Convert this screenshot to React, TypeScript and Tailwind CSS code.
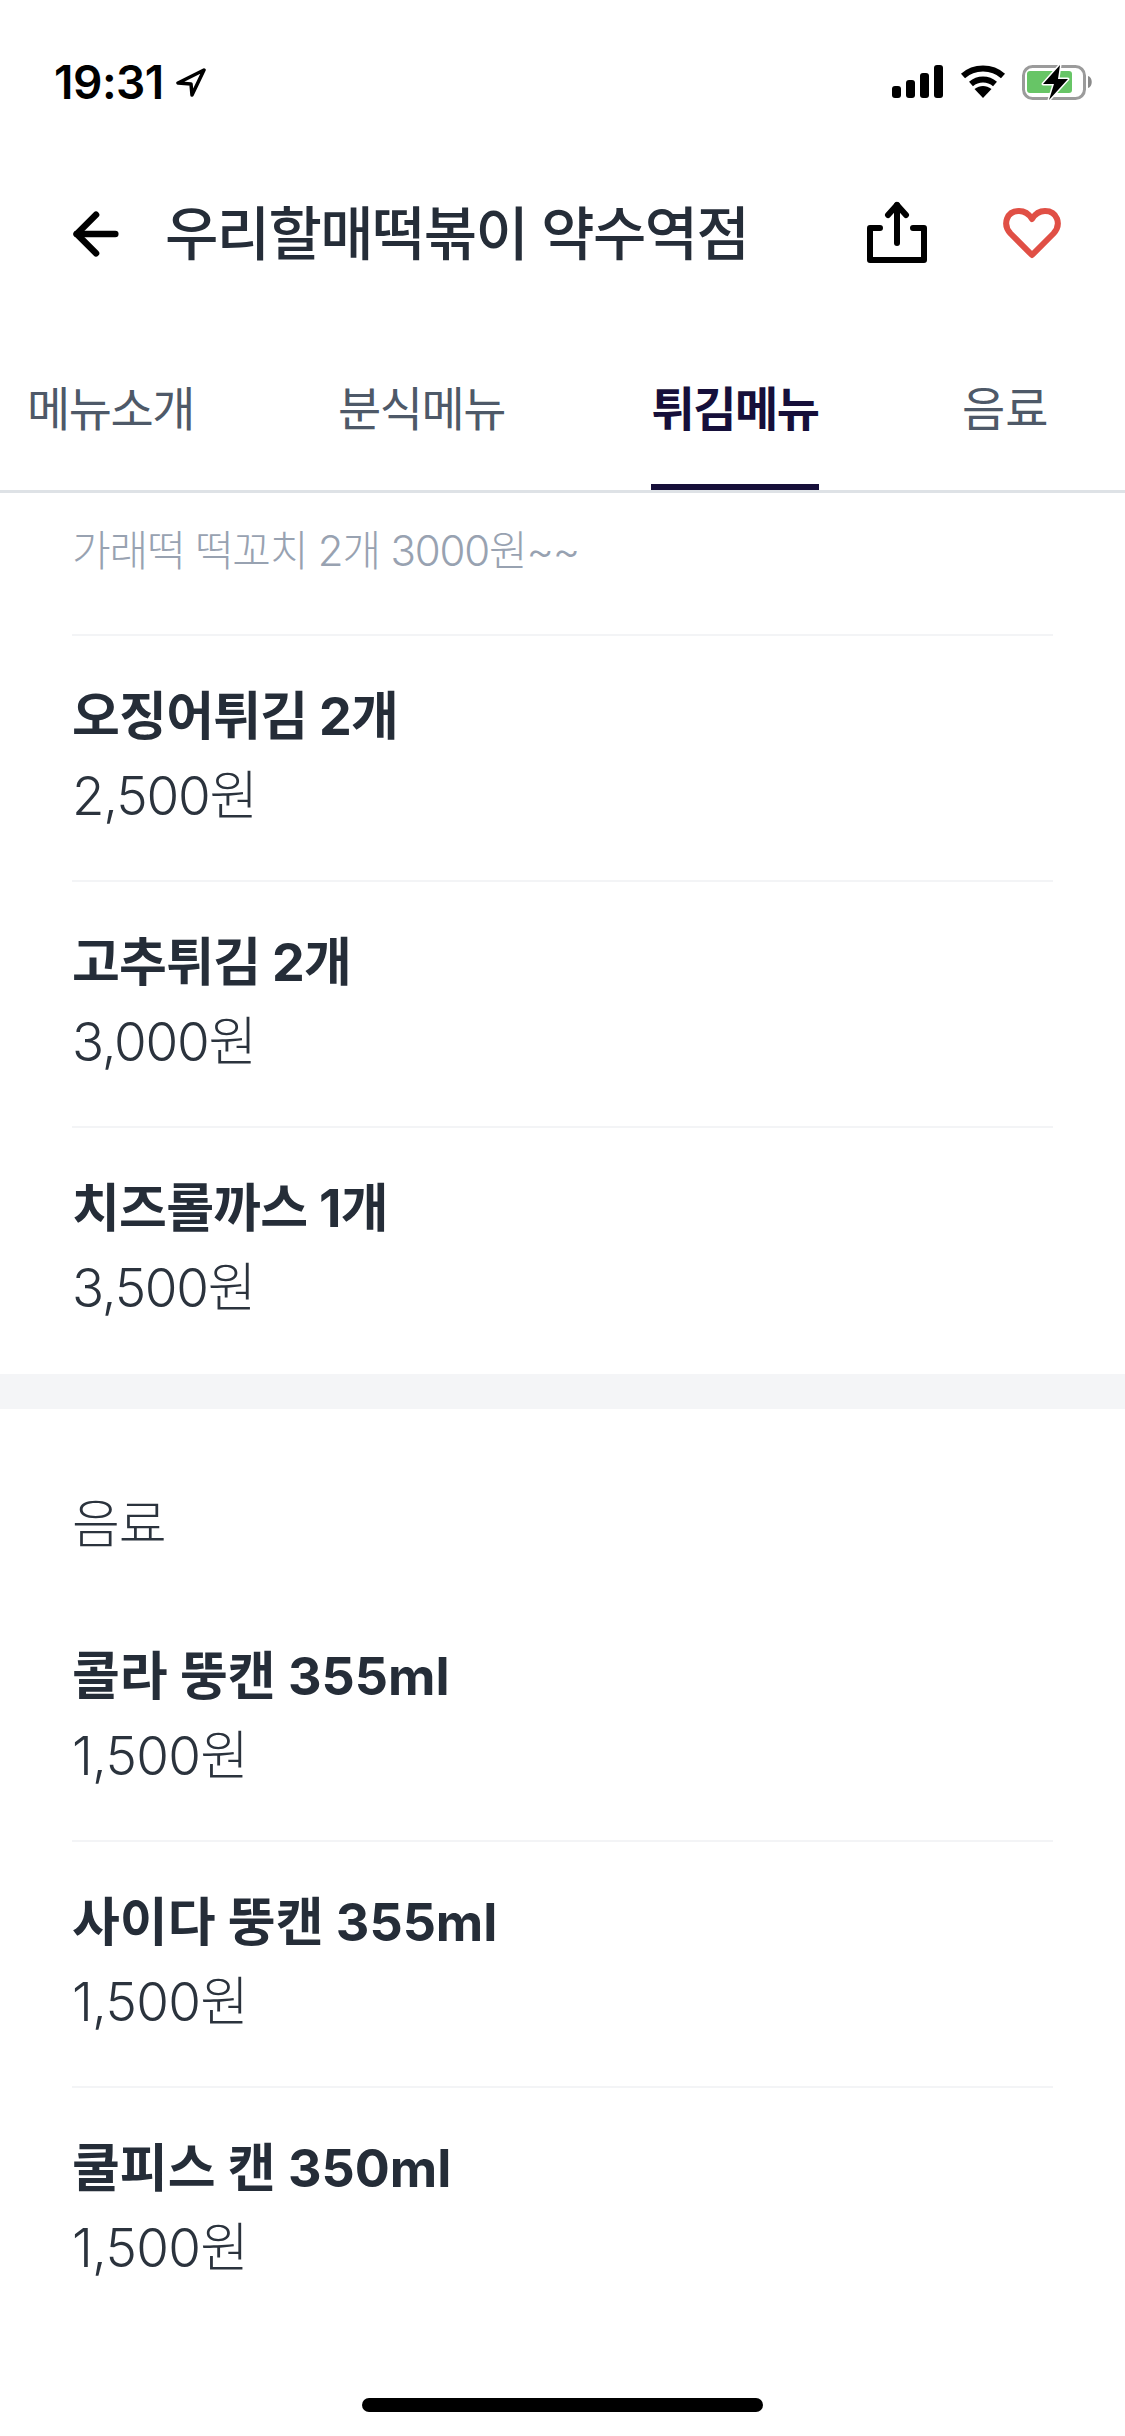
import React from 'react';
import { ArrowLeft } from 'lucide-react';

const FONT = 'font-["Inter","Noto_Sans_CJK_KR",sans-serif]';

const friedItems = [
  { name: '오징어튀김 2개', price: '2,500원' },
  { name: '고추튀김 2개', price: '3,000원' },
  { name: '치즈롤까스 1개', price: '3,500원' },
];

const drinkItems = [
  { name: '콜라 뚱캔 355ml', price: '1,500원' },
  { name: '사이다 뚱캔 355ml', price: '1,500원' },
  { name: '쿨피스 캔 350ml', price: '1,500원' },
];

const MenuItem = ({ name, price, last, wide }: { name: string; price: string; last?: boolean; wide?: boolean }) => (
  <div className={`h-[246px] pt-[42px] ${last ? '' : 'border-b-2 border-[#f3f4f6]'}`}>
    <div className={`h-[78px] flex items-center text-[52px] font-bold leading-none text-[#252d38] ${wide ? 'tracking-normal' : 'tracking-[-0.75px]'}`}>{name}</div>
    <div className={`h-[80px] flex items-center text-[53px] font-light leading-none text-[#2b333d] ${wide ? 'tracking-[-0.75px]' : 'tracking-[-1.25px]'}`}>{price}</div>
  </div>
);

const StatusBar = () => (
  <div className="h-[164px] flex items-center justify-between pl-[54px] pr-[30px]">
    <div className="flex items-center gap-[12px]">
      <span className="text-[46px] font-semibold leading-none text-black tracking-[-0.5px]">19:31</span>
      <svg width="30" height="30" viewBox="0 0 30 30" fill="none" stroke="black" strokeWidth="3.5" strokeLinejoin="round">
        <path d="M28 3 L2 16 L15 17 L16 28 Z" />
      </svg>
    </div>
    <div className="flex items-center">
      <svg width="52" height="34" viewBox="0 0 52 34" fill="black">
        <rect x="0" y="21" width="9" height="12" rx="3" />
        <rect x="14" y="15" width="9" height="18" rx="3" />
        <rect x="28" y="8" width="9" height="25" rx="3" />
        <rect x="42" y="0" width="9" height="33" rx="3" />
      </svg>
      <svg className="ml-[16px]" width="46" height="34" viewBox="0 0 46 34" fill="none" stroke="black" strokeWidth="6">
        <path d="M3 11 C14 1 32 1 43 11" />
        <path d="M11 19 C18 13 28 13 35 19" />
        <path d="M14.5 24 L23 33 L31.5 24 C26 20 20 20 14.5 24 Z" fill="black" stroke="none" />
      </svg>
      <svg className="ml-[15px]" width="74" height="40" viewBox="0 0 74 40" fill="none">
        <rect x="2.5" y="4.5" width="61" height="32" rx="9" stroke="#9b9b9b" strokeWidth="3" />
        <rect x="6" y="9" width="45" height="22" rx="3" fill="#67c566" />
        <path d="M67 14 C72 15 72 25 67 26 Z" fill="#8a8a8a" />
        <path d="M39 3 L22 22 L33 22 L28 38 L47 17 L37 17 Z" fill="black" stroke="white" strokeWidth="3" strokeLinejoin="round" paintOrder="stroke" />
      </svg>
    </div>
  </div>
);

export default function App() {
  return (
    <div className={`w-[1125px] h-[2436px] bg-white overflow-hidden relative ${FONT}`}>
      <StatusBar />

      {/* header */}
      <div className="h-[140px] flex items-center pl-[63px] pr-[64px]">
        <ArrowLeft size={66} strokeWidth={2.4} color="black" />
        <h1 className="ml-[36px] flex-1 text-[58px] font-medium leading-none tracking-[-1.6px] text-[#252d38]">우리할매떡볶이 약수역점</h1>
        <svg width="60" height="66" viewBox="0 0 60 66" fill="none" stroke="black" strokeWidth="6" strokeLinecap="round" strokeLinejoin="round">
          <path d="M13 27 H3 V59 H57 V27 H46" />
          <path d="M30 42 V4" />
          <path d="M21 14 L30 4 L39 14" />
        </svg>
        <svg className="ml-[76px]" width="58" height="52" viewBox="0 0 58 52" fill="none" stroke="#e04f45" strokeWidth="6" strokeLinejoin="round">
          <path d="M29 47 L7.5 25.5 C-1 16 4 3 16 3 C21 3 26 6 29 11 C32 6 37 3 42 3 C54 3 59 16 50.5 25.5 Z" />
        </svg>
      </div>

      {/* tabs */}
      <div className="h-[189px] border-b-[3px] border-[#dee2e6] flex text-[47px] leading-none">
        <div className="w-[651px] flex items-start pt-[81px] text-[#4e5968] tracking-[-1.5px]">
          <span className="ml-[27px] w-[311px]">메뉴소개</span>
          <span>분식메뉴</span>
        </div>
        <div className="w-[168px] h-[186px] border-b-[6px] border-[#160f3a] pt-[81px] text-center font-bold text-[#160f3a] tracking-[-1.5px] whitespace-nowrap">튀김메뉴</div>
        <div className="pt-[81px] ml-[143px] text-[#4e5968]">음료</div>
      </div>

      {/* fried menu */}
      <div className="px-[72px]">
        <div className="h-[143px] pt-[32px] border-b-2 border-[#f3f4f6] text-[42px] font-light leading-[52px] tracking-[-1.2px] text-[#98a2b1]">가래떡 떡꼬치 2개 3000원~~</div>
        {friedItems.map((item, i) => (
          <MenuItem key={item.name} name={item.name} price={item.price} last={i === friedItems.length - 1} />
        ))}
      </div>

      <div className="h-[35px] bg-[#f4f5f7]" />

      {/* drinks */}
      <div className="px-[72px]">
        <div className="h-[187px] pt-[90px] text-[52px] font-light leading-none tracking-[-1px] text-[#2b333d]">음료</div>
        {drinkItems.map((item, i) => (
          <MenuItem key={item.name} name={item.name} price={item.price} last={i === drinkItems.length - 1} wide />
        ))}
      </div>

      <div className="absolute bottom-[24px] left-[362px] w-[401px] h-[14px] rounded-full bg-black" />
    </div>
  );
}
